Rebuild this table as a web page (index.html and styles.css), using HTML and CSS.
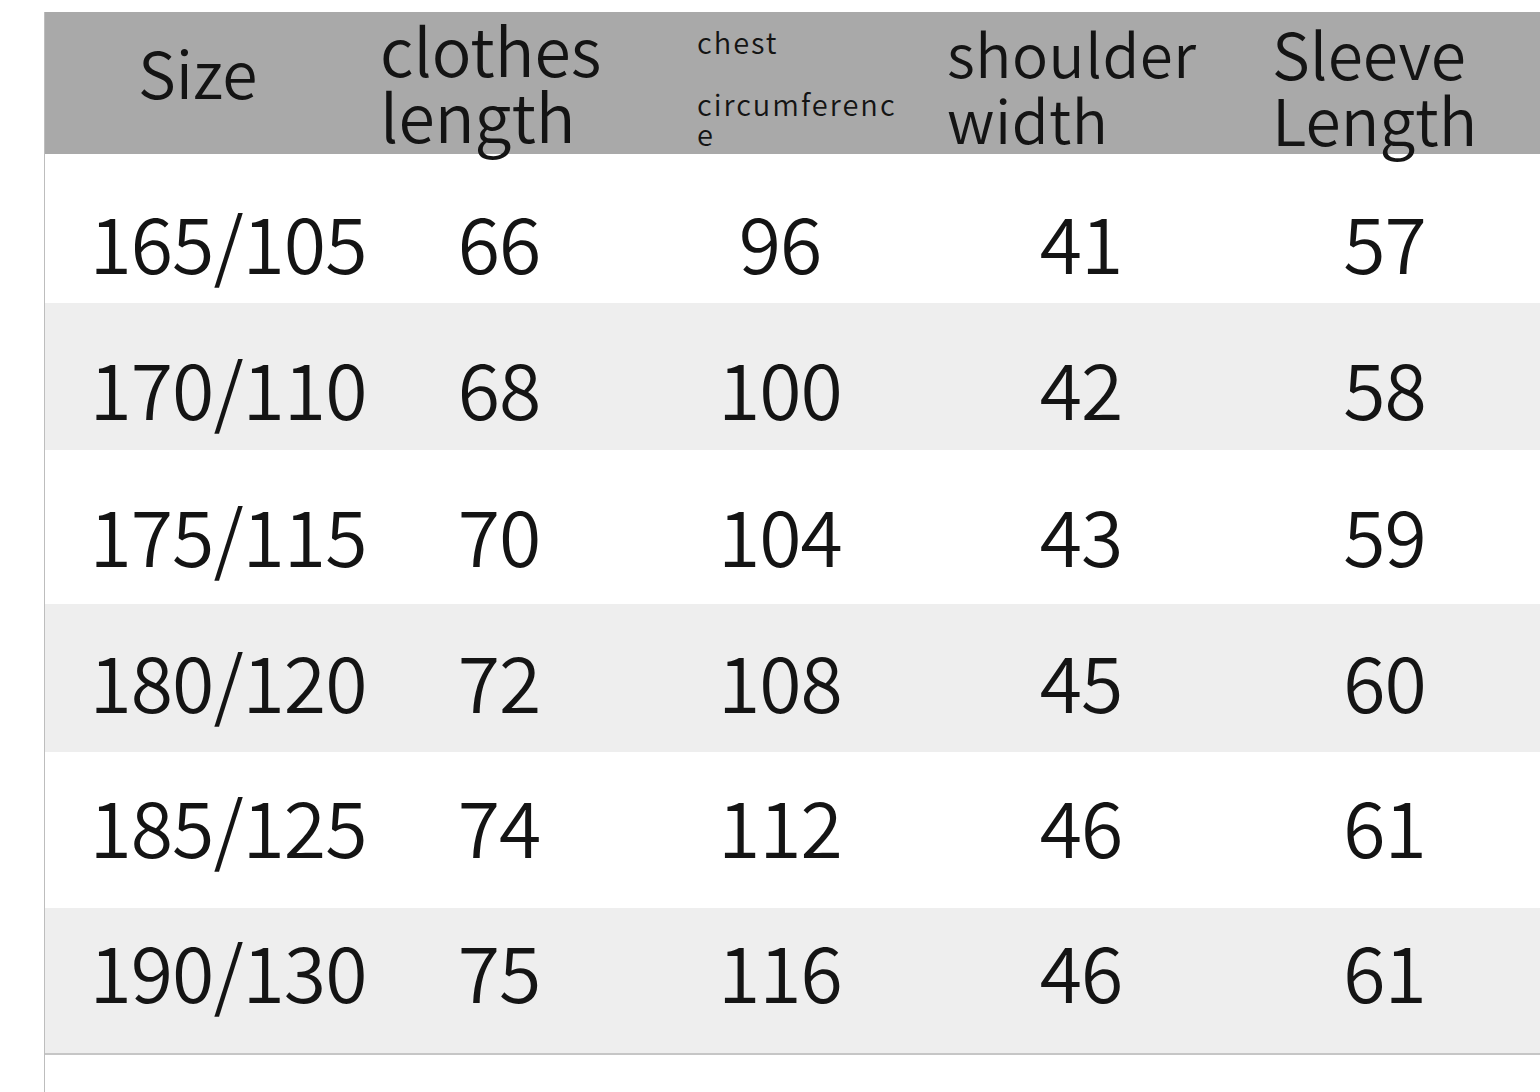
FILE: index.html
```html
<!DOCTYPE html>
<html>
<head>
<meta charset="utf-8">
<link rel="stylesheet" href="styles.css">
</head>
<body>
<div class="sheet">
  <div class="head">
    <div class="hcell h-size">Size</div>
    <div class="hcell h-len"><span>clothes</span><span>length</span></div>
    <div class="hcell h-chest"><span class="c1">chest</span><span class="c2">circumferenc</span><span class="c3">e</span></div>
    <div class="hcell h-sh"><span>shoulder</span><span>width</span></div>
    <div class="hcell h-sl"><span>Sleeve</span><span>Length</span></div>
  </div>
  <div class="row r1"><div>165/105</div><div>66</div><div>96</div><div>41</div><div class="last">57</div></div>
  <div class="row r2 alt"><div>170/110</div><div>68</div><div>100</div><div>42</div><div class="last">58</div></div>
  <div class="row r3"><div>175/115</div><div>70</div><div>104</div><div>43</div><div class="last">59</div></div>
  <div class="row r4 alt"><div>180/120</div><div>72</div><div>108</div><div>45</div><div class="last">60</div></div>
  <div class="row r5"><div>185/125</div><div>74</div><div>112</div><div>46</div><div class="last">61</div></div>
  <div class="row r6 alt"><div>190/130</div><div>75</div><div>116</div><div>46</div><div class="last">61</div></div>
</div>
</body>
</html>
```
FILE: styles.css
```css
html, body {
  margin: 0;
  padding: 0;
  background: #ffffff;
  overflow: hidden;
  height: 1092px;
}
body {
  font-family: "Noto Sans CJK SC", "Noto Sans", sans-serif;
  font-weight: 350;
  color: #141414;
}
.sheet {
  margin-top: 12px;
  margin-left: 44px;
  border-left: 1px solid #bdbdbd;
  height: 1080px;
  width: 1495px;
}
.head {
  height: 142px;
  background: #a9a9a9;
  display: grid;
  grid-template-columns: 335px 317px 250px 325px 268px;
  font-size: 66px;
  line-height: 66px;
  box-sizing: border-box;
}
.hcell {
  display: flex;
  flex-direction: column;
  padding-top: 3px;
}
.h-size {
  justify-content: center;
  padding-left: 93px;
  padding-top: 0;
  padding-bottom: 24px;
  font-size: 64px;
}
.h-sh {
  padding-top: 7px;
  font-size: 60px;
  letter-spacing: 0.5px;
}
.h-sl {
  padding-top: 7px;
  font-size: 64px;
}
.h-chest {
  font-size: 29px;
  line-height: 30px;
  letter-spacing: 2px;
  padding-top: 14px;
}
.h-chest .c2 { margin-top: 32px; }
.row {
  display: grid;
  grid-template-columns: 366px 176px 386px 216px 351px;
  font-size: 77px;
  line-height: 85px;
  letter-spacing: -1px;
  height: 150px;
  box-sizing: border-box;
  text-align: center;
}
.row .last { padding-left: 40px; }
.alt { background: #eeeeee; }
.r1 { height: 149px; padding-top: 44px; }
.r2 { height: 147px; padding-top: 41px; }
.r3 { height: 154px; padding-top: 41px; }
.r4 { height: 148px; padding-top: 33px; }
.r5 { height: 156px; padding-top: 30px; }
.r6 { height: 147px; padding-top: 19px; border-bottom: 2px solid #c6c6c6; }
```
